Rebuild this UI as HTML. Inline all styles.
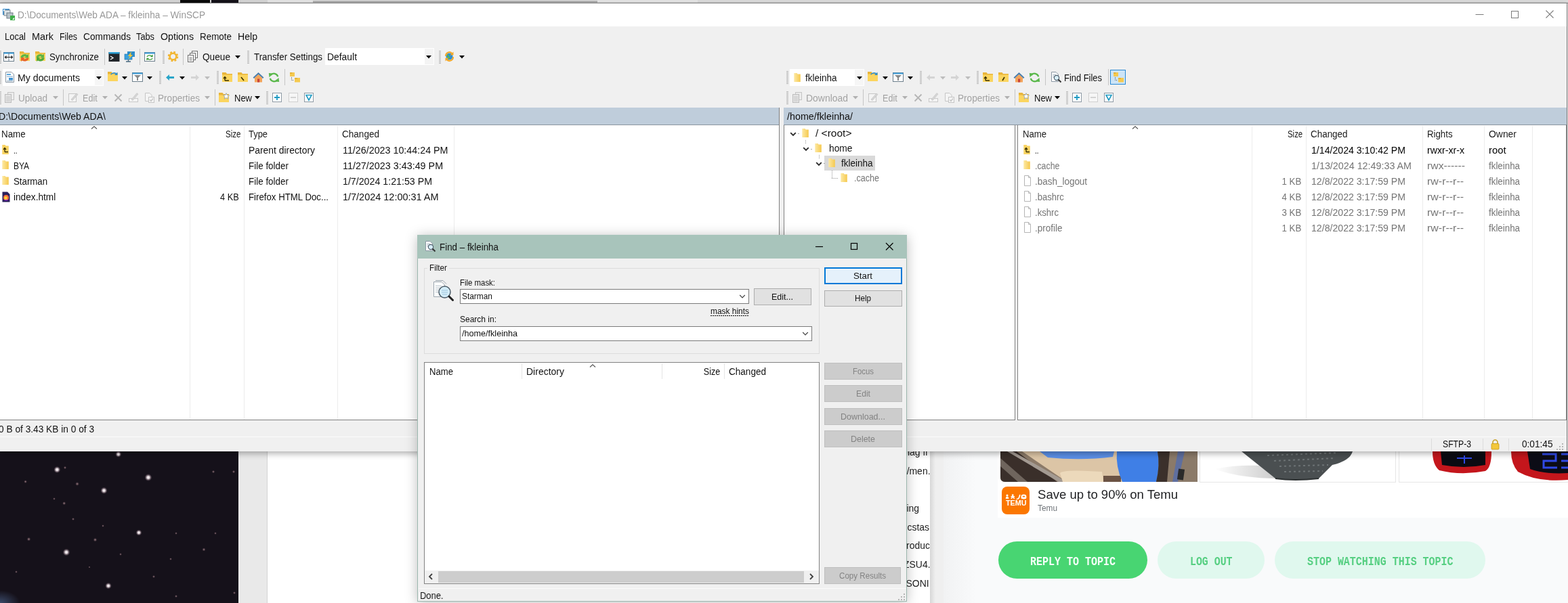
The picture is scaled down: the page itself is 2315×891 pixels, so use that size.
<!DOCTYPE html>
<html><head><meta charset="utf-8"><title>WinSCP</title>
<style>
html,body{margin:0;padding:0}
body{width:2315px;height:891px;position:relative;overflow:hidden;background:#fff;font-family:"Liberation Sans",sans-serif}
#root{position:absolute;left:0;top:0;width:2315px;height:891px;overflow:hidden;will-change:transform}
body div,body svg,body span.t{position:absolute;box-sizing:border-box}
span.t{white-space:nowrap;display:block}
</style></head><body><div id="root">
<div style="left:0px;top:0px;width:2315px;height:5px;background:#dcdcdc;"></div>
<div style="left:266px;top:0px;width:44px;height:4px;background:#0a0a0a;"></div>
<div style="left:312px;top:0px;width:40px;height:4px;background:#15121a;"></div>
<div style="left:395px;top:0px;width:635px;height:4px;background:#ececec;"></div>
<div style="left:1030px;top:0px;width:1285px;height:4px;background:#e2e2e2;"></div>
<div style="left:462px;top:1px;width:420px;height:3px;background:rgba(0,0,0,.22);"></div>
<div style="left:0px;top:4px;width:2315px;height:1px;background:#8a8a8a;"></div>
<div style="left:0px;top:667px;width:352px;height:224px;background:#15111a;"></div>
<div style="left:0px;top:872px;width:30px;height:19px;background:radial-gradient(ellipse at 0% 100%,rgba(90,120,170,.55),rgba(60,80,130,0) 70%);"></div>
<div style="left:352px;top:667px;width:43px;height:224px;background:#e9e9e9;"></div>
<div style="left:394px;top:667px;width:1px;height:224px;background:#d4d4d4;"></div>
<div style="left:395px;top:667px;width:978px;height:224px;background:#fff;"></div>
<div style="left:1373px;top:667px;width:20px;height:224px;background:#efefef;"></div>
<div style="left:1392px;top:667px;width:1px;height:224px;background:#dedede;"></div>
<div style="left:1393px;top:667px;width:47px;height:224px;background:linear-gradient(90deg,#f1f2f3,#f9fafb);"></div>
<div style="left:1440px;top:667px;width:875px;height:224px;background:#f9fafb;"></div>
<svg style="left:0px;top:667px" width="352" height="224" viewBox="0 0 352 224"><defs><radialGradient id="st"><stop offset="0" stop-color="#fff"/><stop offset=".35" stop-color="#f4e9ee" stop-opacity=".9"/><stop offset="1" stop-color="#8a6a7a" stop-opacity="0"/></radialGradient><radialGradient id="st2"><stop offset="0" stop-color="#c9a3a3" stop-opacity=".8"/><stop offset="1" stop-color="#7a5a6a" stop-opacity="0"/></radialGradient></defs><circle cx="174.8" cy="4.2" r="4.5" fill="url(#st)"/><circle cx="84.3" cy="27.0" r="5.1" fill="url(#st)"/><circle cx="218.9" cy="38.5" r="5.4" fill="url(#st)"/><circle cx="153.5" cy="57.8" r="5.1" fill="url(#st)"/><circle cx="114.0" cy="48.0" r="2.9" fill="url(#st2)"/><circle cx="205.0" cy="120.0" r="4.5" fill="url(#st)"/><circle cx="98.0" cy="149.0" r="5.4" fill="url(#st)"/><circle cx="160.0" cy="198.6" r="4.8" fill="url(#st)"/><circle cx="42.5" cy="129.7" r="2.9" fill="url(#st2)"/><circle cx="140.5" cy="130.6" r="2.9" fill="url(#st2)"/><circle cx="301.0" cy="145.0" r="2.6" fill="url(#st2)"/><circle cx="94.7" cy="76.7" r="2.6" fill="url(#st2)"/><circle cx="37.6" cy="44.7" r="2.4" fill="url(#st2)"/><circle cx="80.0" cy="70.0" r="1.9" fill="url(#st2)"/><circle cx="108.0" cy="100.0" r="2.1" fill="url(#st2)"/><circle cx="152.0" cy="110.0" r="1.9" fill="url(#st2)"/><circle cx="260.0" cy="121.0" r="1.9" fill="url(#st2)"/><circle cx="318.0" cy="121.0" r="1.9" fill="url(#st2)"/><circle cx="227.0" cy="185.0" r="2.1" fill="url(#st2)"/><circle cx="252.0" cy="159.0" r="1.9" fill="url(#st2)"/><circle cx="178.0" cy="152.0" r="1.9" fill="url(#st2)"/><circle cx="315.0" cy="30.0" r="2.2" fill="url(#st2)"/><circle cx="345.0" cy="30.0" r="2.2" fill="url(#st2)"/><circle cx="96.0" cy="24.0" r="2.2" fill="url(#st2)"/><circle cx="24.0" cy="178.0" r="1.9" fill="url(#st2)"/><circle cx="346.0" cy="209.0" r="2.1" fill="url(#st2)"/><circle cx="260.0" cy="214.0" r="2.1" fill="url(#st2)"/><circle cx="132.0" cy="171.0" r="1.6" fill="url(#st2)"/></svg>
<span class="t" style="top:685.30px;font:400 15px/21px 'Liberation Sans',sans-serif;color:#222;left:1335.98px;transform-origin:100% 0;transform:scaleX(0.9300);">/men.</span>
<span class="t" style="top:740.30px;font:400 15px/21px 'Liberation Sans',sans-serif;color:#222;left:1337.48px;transform-origin:100% 0;transform:scaleX(0.9300);">ing</span>
<span class="t" style="top:768.30px;font:400 15px/21px 'Liberation Sans',sans-serif;color:#222;left:1327.48px;transform-origin:100% 0;transform:scaleX(0.9300);">Ecstas</span>
<span class="t" style="top:823.30px;font:400 15px/21px 'Liberation Sans',sans-serif;color:#222;left:1330.99px;transform-origin:100% 0;transform:scaleX(0.9300);">ZSU4.</span>
<span class="t" style="top:851.30px;font:400 15px/21px 'Liberation Sans',sans-serif;color:#222;left:1334.83px;transform-origin:100% 0;transform:scaleX(0.9300);">SONI</span>
<span class="t" style="top:657.30px;font:400 15px/21px 'Liberation Sans',sans-serif;color:#222;left:1339.50px;transform-origin:0 0;transform:scaleX(0.9300);">lag fi</span>
<span class="t" style="top:795.30px;font:400 15px/21px 'Liberation Sans',sans-serif;color:#222;left:1338.00px;transform-origin:0 0;transform:scaleX(0.9300);">roduct</span>
<div style="left:1373px;top:667px;width:20px;height:224px;background:#efefef;"></div>
<div style="left:1373px;top:667px;width:8px;height:224px;background:linear-gradient(90deg,rgba(0,0,0,.10),rgba(0,0,0,0));"></div>
<div style="left:1473px;top:667px;width:842px;height:98px;background:#fff;"></div>
<svg style="left:1477px;top:667px" width="291" height="45" viewBox="0 0 291 45"><defs><clipPath id="adc"><path d="M0,0 H291 V45 H7 Q0,45 0,38 Z"/></clipPath></defs><g clip-path="url(#adc)"><rect width="291" height="45" fill="#8b7a69"/><path d="M0,0 H24 L84,45 H0 Z" fill="#3a2f2a"/><path d="M0,10 L40,45 H26 L0,22 Z" fill="#6f655d"/><path d="M10,0 L18,0 L98,45 L86,45 Z" fill="#a39a92"/><path d="M32,0 H180 V45 H98 Z" fill="#dcc5a6"/><path d="M58,0 H168 L166,8 Q120,14 70,9 Z" fill="#5b8fe6"/><path d="M88,32 Q92,26 150,30 L152,45 H92 Z" fill="#ecd9bb"/><path d="M152,36 H178 V45 H152 Z" fill="#6b5344"/><path d="M172,0 H232 Q236,20 230,45 H180 Q170,22 172,0 Z" fill="#3f7fe6"/><path d="M232,0 H250 L246,45 H230 Q236,20 232,0Z" fill="#3b302b"/><path d="M262,0 L272,0 L262,45 H254 Z" fill="#5f6f9f"/><rect x="262" y="26" width="9" height="16" fill="#2a2a2a" transform="rotate(8 266 34)"/></g></svg>
<div style="left:1771px;top:667px;width:290px;height:46px;background:#fff;border:1px solid #e6e6e6;border-top:0"></div>
<div style="left:2065px;top:667px;width:250px;height:46px;background:#fff;border:1px solid #e6e6e6;border-top:0;border-right:0"></div>
<svg style="left:1771px;top:667px" width="290" height="45" viewBox="0 0 290 45"><defs><linearGradient id="shd" x1="0" x2="1"><stop offset="0" stop-color="#fff"/><stop offset="1" stop-color="#c9c9c9"/></linearGradient></defs><path d="M22,26 Q60,18 110,22 L118,40 Q60,40 22,26 Z" fill="url(#shd)"/><path d="M62,0 H226 Q222,14 196,20 L176,40 Q140,44 112,40 Z" fill="#4a4f51"/><path d="M112,40 Q140,44 176,40" stroke="#2e3233" stroke-width="2" fill="none"/><path d="M100,6 L205,2 M110,14 L200,10 M118,22 L190,20 M125,30 L182,29" stroke="#6d7375" stroke-width="2" stroke-dasharray="3 4"/></svg>
<svg style="left:2065px;top:667px" width="250" height="45" viewBox="0 0 250 45"><path d="M50,0 H137 Q137,24 128,29 Q92,36 60,28 Q50,20 50,0 Z" fill="#c4161c"/><path d="M62,0 H128 V20 Q96,26 64,20 Z" fill="#0b0b12"/><path d="M86,10 H108 M97,6 V18" stroke="#2f49e6" stroke-width="2"/><path d="M166,0 H250 V42 Q205,46 176,30 Q166,18 166,0 Z" fill="#c4161c"/><path d="M190,0 H250 V32 Q215,34 194,26 Z" fill="#0c0c16"/><path d="M212,4 H232 V14 H214 V24 H234 M240,4 H250 M240,14 H250 M240,24 H250" stroke="#2f49e6" stroke-width="3" fill="none"/></svg>
<div style="left:1479px;top:719px;width:41px;height:41px;background:#fb7701;border-radius:8px"></div>
<span class="t" style="top:736.29px;font:700 11px/15px 'Liberation Sans',sans-serif;color:#fff;left:1484.50px;transform-origin:0 0;transform:scaleX(0.9851);">TEMU</span>
<svg style="left:1484px;top:730px" width="32" height="8" viewBox="0 0 32 8"><g fill="#fff"><path d="M0.8,7 Q0.5,4 3,3.800 Q5.5,4 5.200,7 Z"/><circle cx="3" cy="2" r="1.6"/><path d="M8.500,3 h5.500 v1.5 h-1.2 l1.5,2.500 h-1.8 l-1.200,-2 l-1.200,2 h-1.800 l1.500,-2.500 h-1.300 z"/><circle cx="11.2" cy="1.700" r="1.400"/><path d="M16.5,7 q3.500,0.300 4.500,-6.200 l1.600,0.300 q-1,7.600 -6.100,7.500 z"/><path d="M24.2,1.400 q3.300,-1.600 6.600,0 q1.300,2.800 0,5.600 q-3.300,0.800 -6.600,0 q-1.300,-2.800 0,-5.600 z M25.800,2.800 v1.600 h3.400 v-1.600 z"/></g></svg>
<span class="t" style="top:717.59px;font:400 18.5px/26px 'Liberation Sans',sans-serif;color:#202124;left:1532.00px;transform-origin:0 0;transform:scaleX(1.0030);">Save up to 90% on Temu</span>
<span class="t" style="top:741.67px;font:400 12.5px/18px 'Liberation Sans',sans-serif;color:#70757a;left:1532.00px;transform-origin:0 0;transform:scaleX(0.9487);">Temu</span>
<div style="left:1474px;top:800px;width:220px;height:55px;background:#48d572;border-radius:28px"></div>
<div style="left:1709px;top:800px;width:158px;height:55px;background:#e0f8ee;border-radius:28px"></div>
<div style="left:1882px;top:800px;width:311px;height:55px;background:#e0f8ee;border-radius:28px"></div>
<span class="t" style="top:817.84px;font:700 17.5px/24px 'Liberation Mono',monospace;color:#f4fff8;left:1521.00px;transform-origin:0 0;transform:scaleX(0.8570);">REPLY TO TOPIC</span>
<span class="t" style="top:817.84px;font:700 17.5px/24px 'Liberation Mono',monospace;color:#56cf82;left:1757.00px;transform-origin:0 0;transform:scaleX(0.8502);">LOG OUT</span>
<span class="t" style="top:817.84px;font:700 17.5px/24px 'Liberation Mono',monospace;color:#56cf82;left:1929.50px;transform-origin:0 0;transform:scaleX(0.8550);">STOP WATCHING THIS TOPIC</span>
<div style="left:0px;top:5px;width:2315px;height:662px;background:#f0f0f0;box-shadow:0 2px 9px 1px rgba(0,0,0,.33)"></div>
<div style="left:0px;top:5px;width:2315px;height:34px;background:#fff;"></div>
<div style="left:0px;top:39px;width:2315px;height:120px;background:#f0f0f0;"></div>
<div style="left:0px;top:159px;width:2315px;height:508px;background:#f0f0f0;"></div>
<svg style="left:3px;top:12px" width="19" height="18" viewBox="0 0 19 18"><rect x="1" y="1" width="10" height="9" fill="#3a8fd0"/><rect x="3" y="3" width="9" height="8" fill="#dfe6ea" stroke="#7a8790" stroke-width="1"/><rect x="7" y="7" width="9" height="8" fill="#b9c3c9" stroke="#6f7c85" stroke-width="1"/><rect x="12" y="11" width="7" height="7" fill="#3fae49"/><path d="M2,2 l3,0 l-3,3z" fill="#fff"/><path d="M18,17 l-3,0 l3,-3z" fill="#fff"/></svg>
<span class="t" style="top:12.15px;font:400 14px/20px 'Liberation Sans',sans-serif;color:#999;left:26.00px;transform-origin:0 0;transform:scaleX(0.9735);">D:\Documents\Web ADA – fkleinha – WinSCP</span>
<svg style="left:2178px;top:15px" width="13" height="13" viewBox="0 0 13 13"><path d="M0.5,6.5 H12.5" stroke="#7a7a7a" stroke-width="1"/></svg>
<svg style="left:2230px;top:15px" width="13" height="13" viewBox="0 0 13 13"><rect x="1.5" y="1.5" width="10" height="10" fill="none" stroke="#7a7a7a" stroke-width="1"/></svg>
<svg style="left:2281px;top:14px" width="14" height="14" viewBox="0 0 14 14"><path d="M1.5,1.5 L12.5,12.5 M12.5,1.5 L1.5,12.5" stroke="#7a7a7a" stroke-width="1.1"/></svg>
<span class="t" style="top:44.15px;font:400 14px/20px 'Liberation Sans',sans-serif;color:#111;left:7.00px;transform-origin:0 0;transform:scaleX(0.9262);">Local</span>
<span class="t" style="top:44.15px;font:400 14px/20px 'Liberation Sans',sans-serif;color:#111;left:47.00px;transform-origin:0 0;transform:scaleX(1.0286);">Mark</span>
<span class="t" style="top:44.15px;font:400 14px/20px 'Liberation Sans',sans-serif;color:#111;left:88.00px;transform-origin:0 0;transform:scaleX(0.8796);">Files</span>
<span class="t" style="top:44.15px;font:400 14px/20px 'Liberation Sans',sans-serif;color:#111;left:123.00px;transform-origin:0 0;transform:scaleX(0.9779);">Commands</span>
<span class="t" style="top:44.15px;font:400 14px/20px 'Liberation Sans',sans-serif;color:#111;left:201.00px;transform-origin:0 0;transform:scaleX(0.9130);">Tabs</span>
<span class="t" style="top:44.15px;font:400 14px/20px 'Liberation Sans',sans-serif;color:#111;left:237.00px;transform-origin:0 0;transform:scaleX(1.0156);">Options</span>
<span class="t" style="top:44.15px;font:400 14px/20px 'Liberation Sans',sans-serif;color:#111;left:295.00px;transform-origin:0 0;transform:scaleX(0.9588);">Remote</span>
<span class="t" style="top:44.15px;font:400 14px/20px 'Liberation Sans',sans-serif;color:#111;left:351.00px;transform-origin:0 0;transform:scaleX(1.0072);">Help</span>
<svg style="left:-1px;top:75px" width="3" height="20" viewBox="0 0 3 20"><rect x="0" y="0" width="3" height="1" fill="#b4b4b4"/><rect x="0" y="2" width="3" height="1" fill="#b4b4b4"/><rect x="0" y="4" width="3" height="1" fill="#b4b4b4"/><rect x="0" y="6" width="3" height="1" fill="#b4b4b4"/><rect x="0" y="8" width="3" height="1" fill="#b4b4b4"/><rect x="0" y="10" width="3" height="1" fill="#b4b4b4"/><rect x="0" y="12" width="3" height="1" fill="#b4b4b4"/><rect x="0" y="14" width="3" height="1" fill="#b4b4b4"/><rect x="0" y="16" width="3" height="1" fill="#b4b4b4"/><rect x="0" y="18" width="3" height="1" fill="#b4b4b4"/></svg>
<svg style="left:5px;top:76px" width="17" height="17" viewBox="0 0 17 17"><rect x="0.5" y="1.5" width="15" height="13" fill="#fff" stroke="#6d7f8c"/><rect x="0.5" y="1.5" width="15" height="2" fill="#3a9bd8"/><path d="M8,2 V14" stroke="#6d7f8c"/><path d="M2.5,8.5 H13.5 M4.5,6.5 L2.5,8.5 L4.5,10.5 M11.5,6.5 L13.5,8.5 L11.5,10.5" stroke="#222" fill="none" stroke-width="1.2"/></svg>
<svg style="left:28px;top:75px" width="17" height="16" viewBox="0 0 17 16"><path d="M1,1 H6.5 L8,3 H16 V15 H1 Z" fill="#e9b53a"/><path d="M1,4.5 H16 V15 H1 Z" fill="#fbd55f"/><g transform="translate(0,1)"><path d="M2.5,9 A6,5 0 0 1 12.3,5.300 L14,3.600 V9.500 H8.200 L10.2,7.500 A3,2.300 0 0 0 5.800,9 Z" fill="#5fb446"/><path d="M14.5,9.500 A6,5 0 0 1 4.700,13.200 L3,14.900 V9 H8.800 L6.800,11 A3,2.300 0 0 0 11.2,9.500 Z" fill="#e8632a"/></g></svg>
<svg style="left:51px;top:75px" width="17" height="16" viewBox="0 0 17 16"><path d="M1,1 H6.5 L8,3 H16 V15 H1 Z" fill="#e9b53a"/><path d="M1,4.5 H16 V15 H1 Z" fill="#fbd55f"/><g transform="translate(0,1)"><path d="M2.5,9 A6,5 0 0 1 12.3,5.300 L14,3.600 V9.500 H8.200 L10.2,7.500 A3,2.300 0 0 0 5.800,9 Z" fill="#5fb446"/><path d="M14.5,9.500 A6,5 0 0 1 4.700,13.200 L3,14.900 V9 H8.800 L6.800,11 A3,2.300 0 0 0 11.2,9.500 Z" fill="#4ea83a"/></g></svg>
<span class="t" style="top:74.15px;font:400 14px/20px 'Liberation Sans',sans-serif;color:#111;left:73.00px;transform-origin:0 0;transform:scaleX(0.9475);">Synchronize</span>
<div style="left:154px;top:72px;width:1px;height:24px;background:#c5c5c5;"></div>
<svg style="left:160px;top:76px" width="17" height="17" viewBox="0 0 17 17"><rect x="0.5" y="1" width="16" height="14" fill="#22262b"/><rect x="0.5" y="1" width="16" height="2.5" fill="#2a9fd6"/><path d="M3,7 L7,9.5 L3,12" stroke="#fff" fill="none" stroke-width="1.3"/></svg>
<svg style="left:183px;top:75px" width="17" height="17" viewBox="0 0 17 17"><rect x="5" y="1" width="11" height="8" fill="#2f8ecb"/><rect x="1" y="5" width="11" height="8" fill="#3aa0dd" stroke="#1d6fa5" stroke-width=".6"/><path d="M6.5,13 V15.5 M3,16 H10" stroke="#4a6a80" stroke-width="1.4"/><path d="M11,1 L6,8 H9 L6,13 L13,6 H10 Z" fill="#f7c531"/></svg>
<div style="left:206px;top:72px;width:1px;height:24px;background:#c5c5c5;"></div>
<svg style="left:213px;top:76px" width="17" height="17" viewBox="0 0 17 17"><rect x="0.5" y="1.5" width="15" height="13" fill="#fff" stroke="#6d7f8c"/><rect x="0.5" y="1.5" width="15" height="2" fill="#3a9bd8"/><path d="M4,8 a4,3 0 0 1 7,-1 M12,5 v2.5 h-2.5 M12,10 a4,3 0 0 1 -7,1 M4,13 v-2.5 h2.5" stroke="#3f9b3a" fill="none" stroke-width="1.3"/></svg>
<svg style="left:240px;top:75px" width="3" height="20" viewBox="0 0 3 20"><rect x="0" y="0" width="3" height="1" fill="#b4b4b4"/><rect x="0" y="2" width="3" height="1" fill="#b4b4b4"/><rect x="0" y="4" width="3" height="1" fill="#b4b4b4"/><rect x="0" y="6" width="3" height="1" fill="#b4b4b4"/><rect x="0" y="8" width="3" height="1" fill="#b4b4b4"/><rect x="0" y="10" width="3" height="1" fill="#b4b4b4"/><rect x="0" y="12" width="3" height="1" fill="#b4b4b4"/><rect x="0" y="14" width="3" height="1" fill="#b4b4b4"/><rect x="0" y="16" width="3" height="1" fill="#b4b4b4"/><rect x="0" y="18" width="3" height="1" fill="#b4b4b4"/></svg>
<svg style="left:247px;top:75px" width="17" height="17" viewBox="0 0 17 17"><circle cx="8.5" cy="8.5" r="6.2" fill="none" stroke="#f2b632" stroke-width="3.2" stroke-dasharray="2.6 2.27"/><circle cx="8.5" cy="8.5" r="4.8" fill="none" stroke="#f2b632" stroke-width="2.6"/></svg>
<div style="left:270px;top:72px;width:1px;height:24px;background:#c5c5c5;"></div>
<svg style="left:277px;top:75px" width="17" height="17" viewBox="0 0 17 17"><rect x="6.5" y="0.5" width="8" height="10" fill="#f4f4f4" stroke="#707070"/><rect x="3.5" y="3.5" width="8" height="10" fill="#f4f4f4" stroke="#707070"/><rect x="0.5" y="6.5" width="8" height="10" fill="#f4f4f4" stroke="#707070"/><path d="M2.5,10 H6.5 M2.5,12 H6.5 M2.5,14 H6.5" stroke="#707070" stroke-width=".8"/></svg>
<span class="t" style="top:74.15px;font:400 14px/20px 'Liberation Sans',sans-serif;color:#111;left:299.00px;transform-origin:0 0;transform:scaleX(0.9754);">Queue</span>
<svg style="left:347px;top:82px" width="8" height="5" viewBox="0 0 8 5"><path d="M0,0 H8 L4,4.5 Z" fill="#000"/></svg>
<svg style="left:365px;top:75px" width="3" height="20" viewBox="0 0 3 20"><rect x="0" y="0" width="3" height="1" fill="#b4b4b4"/><rect x="0" y="2" width="3" height="1" fill="#b4b4b4"/><rect x="0" y="4" width="3" height="1" fill="#b4b4b4"/><rect x="0" y="6" width="3" height="1" fill="#b4b4b4"/><rect x="0" y="8" width="3" height="1" fill="#b4b4b4"/><rect x="0" y="10" width="3" height="1" fill="#b4b4b4"/><rect x="0" y="12" width="3" height="1" fill="#b4b4b4"/><rect x="0" y="14" width="3" height="1" fill="#b4b4b4"/><rect x="0" y="16" width="3" height="1" fill="#b4b4b4"/><rect x="0" y="18" width="3" height="1" fill="#b4b4b4"/></svg>
<span class="t" style="top:74.15px;font:400 14px/20px 'Liberation Sans',sans-serif;color:#111;left:375.00px;transform-origin:0 0;transform:scaleX(0.9521);">Transfer Settings</span>
<div style="left:480px;top:71px;width:161px;height:25px;background:#fff;"></div>
<div style="left:627px;top:72px;width:13px;height:23px;background:#f4f4f4;"></div>
<span class="t" style="top:74.15px;font:400 14px/20px 'Liberation Sans',sans-serif;color:#111;left:483.00px;transform-origin:0 0;transform:scaleX(0.9919);">Default</span>
<svg style="left:629px;top:82px" width="8" height="5" viewBox="0 0 8 5"><path d="M0,0 H8 L4,4.5 Z" fill="#000"/></svg>
<svg style="left:648px;top:75px" width="3" height="20" viewBox="0 0 3 20"><rect x="0" y="0" width="3" height="1" fill="#b4b4b4"/><rect x="0" y="2" width="3" height="1" fill="#b4b4b4"/><rect x="0" y="4" width="3" height="1" fill="#b4b4b4"/><rect x="0" y="6" width="3" height="1" fill="#b4b4b4"/><rect x="0" y="8" width="3" height="1" fill="#b4b4b4"/><rect x="0" y="10" width="3" height="1" fill="#b4b4b4"/><rect x="0" y="12" width="3" height="1" fill="#b4b4b4"/><rect x="0" y="14" width="3" height="1" fill="#b4b4b4"/><rect x="0" y="16" width="3" height="1" fill="#b4b4b4"/><rect x="0" y="18" width="3" height="1" fill="#b4b4b4"/></svg>
<svg style="left:655px;top:75px" width="17" height="17" viewBox="0 0 17 17"><circle cx="8.5" cy="8.5" r="5" fill="#2f8fd1"/><path d="M6,5 q2,1 1,3 q3,1 2,4 q-3,0 -3,-3 q-2,-1 0,-4" fill="#56b947"/><path d="M2,8 a6.5,6.5 0 0 1 11,-5 l1.5,-1.5 v5 h-5 l1.7,-1.7 a4,4 0 0 0 -7,3z" fill="#f3a82a"/><path d="M15,9 a6.5,6.5 0 0 1 -11,5 l-1.5,1.5 v-5 h5 l-1.7,1.7 a4,4 0 0 0 7,-3z" fill="#f3a82a"/></svg>
<svg style="left:678px;top:82px" width="8" height="5" viewBox="0 0 8 5"><path d="M0,0 H8 L4,4.5 Z" fill="#000"/></svg>
<div style="left:4px;top:102px;width:149px;height:25px;background:#fff;"></div>
<div style="left:140px;top:103px;width:12px;height:23px;background:#f6f6f6;"></div>
<svg style="left:-1px;top:105px" width="3" height="20" viewBox="0 0 3 20"><rect x="0" y="0" width="3" height="1" fill="#b4b4b4"/><rect x="0" y="2" width="3" height="1" fill="#b4b4b4"/><rect x="0" y="4" width="3" height="1" fill="#b4b4b4"/><rect x="0" y="6" width="3" height="1" fill="#b4b4b4"/><rect x="0" y="8" width="3" height="1" fill="#b4b4b4"/><rect x="0" y="10" width="3" height="1" fill="#b4b4b4"/><rect x="0" y="12" width="3" height="1" fill="#b4b4b4"/><rect x="0" y="14" width="3" height="1" fill="#b4b4b4"/><rect x="0" y="16" width="3" height="1" fill="#b4b4b4"/><rect x="0" y="18" width="3" height="1" fill="#b4b4b4"/></svg>
<svg style="left:7px;top:106px" width="17" height="17" viewBox="0 0 17 17"><path d="M1.5,0.5 H10 L13.5,4 V15.5 H1.5 Z" fill="#fff" stroke="#8a97a3"/><rect x="3" y="3" width="6" height="2" fill="#5aa7dd"/><rect x="3" y="6.5" width="9" height="1.3" fill="#8fb7d6"/><rect x="6" y="9" width="6" height="3.5" fill="#3a8fd0"/><rect x="3" y="13" width="9" height="1.2" fill="#9fb6c8"/></svg>
<span class="t" style="top:105.15px;font:400 14px/20px 'Liberation Sans',sans-serif;color:#111;left:26.00px;transform-origin:0 0;transform:scaleX(1.0106);">My documents</span>
<svg style="left:142px;top:113px" width="8" height="5" viewBox="0 0 8 5"><path d="M0,0 H8 L4,4.5 Z" fill="#000"/></svg>
<svg style="left:158px;top:105px" width="17" height="16" viewBox="0 0 17 16"><path d="M1,1 H6.5 L8,3 H16 V15 H1 Z" fill="#e9b53a"/><path d="M1,4.5 H16 V15 H1 Z" fill="#fbd55f"/><g transform="translate(0,1)"><path d="M5,4 a6,5 0 0 1 9,-2 l1.5,-1.5 v4.5 h-4.5 l1.6,-1.6 a4,3.5 0 0 0 -6,1z" fill="#2f8fd1"/></g></svg>
<svg style="left:180px;top:113px" width="8" height="5" viewBox="0 0 8 5"><path d="M0,0 H8 L4,4.5 Z" fill="#000"/></svg>
<svg style="left:195px;top:106px" width="17" height="17" viewBox="0 0 17 17"><rect x="0.5" y="1.5" width="15" height="13" fill="#fff" stroke="#6d7f8c"/><rect x="0.5" y="1.5" width="15" height="2" fill="#3a9bd8"/><path d="M3,5 H13 L9,9 V13 H7 V9 Z" fill="#8a8a8a"/></svg>
<svg style="left:217px;top:113px" width="8" height="5" viewBox="0 0 8 5"><path d="M0,0 H8 L4,4.5 Z" fill="#000"/></svg>
<svg style="left:235px;top:105px" width="3" height="20" viewBox="0 0 3 20"><rect x="0" y="0" width="3" height="1" fill="#b4b4b4"/><rect x="0" y="2" width="3" height="1" fill="#b4b4b4"/><rect x="0" y="4" width="3" height="1" fill="#b4b4b4"/><rect x="0" y="6" width="3" height="1" fill="#b4b4b4"/><rect x="0" y="8" width="3" height="1" fill="#b4b4b4"/><rect x="0" y="10" width="3" height="1" fill="#b4b4b4"/><rect x="0" y="12" width="3" height="1" fill="#b4b4b4"/><rect x="0" y="14" width="3" height="1" fill="#b4b4b4"/><rect x="0" y="16" width="3" height="1" fill="#b4b4b4"/><rect x="0" y="18" width="3" height="1" fill="#b4b4b4"/></svg>
<svg style="left:244px;top:109px" width="14" height="11" viewBox="0 0 14 11"><path d="M1,5.5 L6,1 V4 H13 V7 H6 V10 Z" fill="#2aa5c9"/></svg>
<svg style="left:265px;top:113px" width="8" height="5" viewBox="0 0 8 5"><path d="M0,0 H8 L4,4.5 Z" fill="#000"/></svg>
<svg style="left:281px;top:109px" width="14" height="11" viewBox="0 0 14 11"><path d="M13,5.5 L8,1 V4 H1 V7 H8 V10 Z" fill="#d4d4d4"/></svg>
<svg style="left:302px;top:113px" width="8" height="5" viewBox="0 0 8 5"><path d="M0,0 H8 L4,4.5 Z" fill="#bdbdbd"/></svg>
<svg style="left:320px;top:105px" width="3" height="20" viewBox="0 0 3 20"><rect x="0" y="0" width="3" height="1" fill="#b4b4b4"/><rect x="0" y="2" width="3" height="1" fill="#b4b4b4"/><rect x="0" y="4" width="3" height="1" fill="#b4b4b4"/><rect x="0" y="6" width="3" height="1" fill="#b4b4b4"/><rect x="0" y="8" width="3" height="1" fill="#b4b4b4"/><rect x="0" y="10" width="3" height="1" fill="#b4b4b4"/><rect x="0" y="12" width="3" height="1" fill="#b4b4b4"/><rect x="0" y="14" width="3" height="1" fill="#b4b4b4"/><rect x="0" y="16" width="3" height="1" fill="#b4b4b4"/><rect x="0" y="18" width="3" height="1" fill="#b4b4b4"/></svg>
<svg style="left:327px;top:106px" width="17" height="16" viewBox="0 0 17 16"><path d="M1,1 H6.5 L8,3 H16 V15 H1 Z" fill="#e9b53a"/><path d="M1,4.5 H16 V15 H1 Z" fill="#fbd55f"/><g transform="translate(0,1)"><path d="M5,12 V7 M3,9 L5,6.5 L7,9 M5,12 H11" stroke="#3a3000" stroke-width="1.4" fill="none"/></g></svg>
<svg style="left:350px;top:106px" width="17" height="16" viewBox="0 0 17 16"><path d="M1,1 H6.5 L8,3 H16 V15 H1 Z" fill="#e9b53a"/><path d="M1,4.5 H16 V15 H1 Z" fill="#fbd55f"/><g transform="translate(0,1)"><path d="M6,7 L10,12" stroke="#3a3000" stroke-width="1.6" fill="none"/></g></svg>
<svg style="left:373px;top:106px" width="17" height="17" viewBox="0 0 17 17"><path d="M0.5,8.5 L8.5,1 L16.5,8.5 L15,10 L8.5,4 L2,10 Z" fill="#4a7fae"/><path d="M3,9 L8.5,4 L14,9 V15.5 H3 Z" fill="#f3a45a"/><rect x="7" y="10.5" width="3.2" height="5" fill="#c9443a"/></svg>
<svg style="left:396px;top:106px" width="17" height="17" viewBox="0 0 17 17"><path d="M14.2,7.2 A6,6 0 0 0 3.6,5" fill="none" stroke="#5ab84b" stroke-width="2.3"/><path d="M0.8,2 L7,2.6 L1.6,8.2 Z" fill="#5ab84b"/><path d="M2.8,9.8 A6,6 0 0 0 13.4,12" fill="none" stroke="#5ab84b" stroke-width="2.3"/><path d="M16.2,15 L10,14.4 L15.4,8.800 Z" fill="#5ab84b"/></svg>
<div style="left:420px;top:102px;width:1px;height:24px;background:#c5c5c5;"></div>
<svg style="left:427px;top:106px" width="17" height="17" viewBox="0 0 17 17"><rect x="1" y="1" width="7" height="6" fill="#f5c94f"/><rect x="1" y="1" width="3.5" height="1.6" fill="#e2ad2f"/><rect x="8" y="9" width="8" height="6.5" fill="#f5c94f"/><rect x="8" y="9" width="4" height="1.6" fill="#e2ad2f"/><path d="M3.5,8 V12.5 H7" stroke="#555" stroke-dasharray="1 1" fill="none"/></svg>
<div style="left:1166px;top:102px;width:110px;height:25px;background:#fff;"></div>
<div style="left:1262px;top:103px;width:13px;height:23px;background:#f6f6f6;"></div>
<svg style="left:1161px;top:105px" width="3" height="20" viewBox="0 0 3 20"><rect x="0" y="0" width="3" height="1" fill="#b4b4b4"/><rect x="0" y="2" width="3" height="1" fill="#b4b4b4"/><rect x="0" y="4" width="3" height="1" fill="#b4b4b4"/><rect x="0" y="6" width="3" height="1" fill="#b4b4b4"/><rect x="0" y="8" width="3" height="1" fill="#b4b4b4"/><rect x="0" y="10" width="3" height="1" fill="#b4b4b4"/><rect x="0" y="12" width="3" height="1" fill="#b4b4b4"/><rect x="0" y="14" width="3" height="1" fill="#b4b4b4"/><rect x="0" y="16" width="3" height="1" fill="#b4b4b4"/><rect x="0" y="18" width="3" height="1" fill="#b4b4b4"/></svg>
<svg style="left:1172px;top:107px" width="11" height="15" viewBox="0 0 11 15"><defs><linearGradient id="sf" x1="0" x2="1"><stop offset="0" stop-color="#fde9a4"/><stop offset="1" stop-color="#f5c94f"/></linearGradient></defs><path d="M0.3,1 H4.6 L5.6,2.4 H9.800 V14 H0.3 Z" fill="url(#sf)"/></svg>
<span class="t" style="top:105.15px;font:400 14px/20px 'Liberation Sans',sans-serif;color:#111;left:1189.00px;transform-origin:0 0;transform:scaleX(0.9636);">fkleinha</span>
<svg style="left:1265px;top:113px" width="8" height="5" viewBox="0 0 8 5"><path d="M0,0 H8 L4,4.5 Z" fill="#000"/></svg>
<svg style="left:1280px;top:105px" width="17" height="16" viewBox="0 0 17 16"><path d="M1,1 H6.5 L8,3 H16 V15 H1 Z" fill="#e9b53a"/><path d="M1,4.5 H16 V15 H1 Z" fill="#fbd55f"/><g transform="translate(0,1)"><path d="M5,4 a6,5 0 0 1 9,-2 l1.5,-1.5 v4.5 h-4.5 l1.6,-1.6 a4,3.5 0 0 0 -6,1z" fill="#2f8fd1"/></g></svg>
<svg style="left:1303px;top:113px" width="8" height="5" viewBox="0 0 8 5"><path d="M0,0 H8 L4,4.5 Z" fill="#000"/></svg>
<svg style="left:1318px;top:106px" width="17" height="17" viewBox="0 0 17 17"><rect x="0.5" y="1.5" width="15" height="13" fill="#fff" stroke="#6d7f8c"/><rect x="0.5" y="1.5" width="15" height="2" fill="#3a9bd8"/><path d="M3,5 H13 L9,9 V13 H7 V9 Z" fill="#8a8a8a"/></svg>
<svg style="left:1340px;top:113px" width="8" height="5" viewBox="0 0 8 5"><path d="M0,0 H8 L4,4.5 Z" fill="#000"/></svg>
<svg style="left:1358px;top:105px" width="3" height="20" viewBox="0 0 3 20"><rect x="0" y="0" width="3" height="1" fill="#b4b4b4"/><rect x="0" y="2" width="3" height="1" fill="#b4b4b4"/><rect x="0" y="4" width="3" height="1" fill="#b4b4b4"/><rect x="0" y="6" width="3" height="1" fill="#b4b4b4"/><rect x="0" y="8" width="3" height="1" fill="#b4b4b4"/><rect x="0" y="10" width="3" height="1" fill="#b4b4b4"/><rect x="0" y="12" width="3" height="1" fill="#b4b4b4"/><rect x="0" y="14" width="3" height="1" fill="#b4b4b4"/><rect x="0" y="16" width="3" height="1" fill="#b4b4b4"/><rect x="0" y="18" width="3" height="1" fill="#b4b4b4"/></svg>
<svg style="left:1367px;top:109px" width="14" height="11" viewBox="0 0 14 11"><path d="M1,5.5 L6,1 V4 H13 V7 H6 V10 Z" fill="#d4d4d4"/></svg>
<svg style="left:1388px;top:113px" width="8" height="5" viewBox="0 0 8 5"><path d="M0,0 H8 L4,4.5 Z" fill="#bdbdbd"/></svg>
<svg style="left:1403px;top:109px" width="14" height="11" viewBox="0 0 14 11"><path d="M13,5.5 L8,1 V4 H1 V7 H8 V10 Z" fill="#d4d4d4"/></svg>
<svg style="left:1425px;top:113px" width="8" height="5" viewBox="0 0 8 5"><path d="M0,0 H8 L4,4.5 Z" fill="#bdbdbd"/></svg>
<svg style="left:1442px;top:105px" width="3" height="20" viewBox="0 0 3 20"><rect x="0" y="0" width="3" height="1" fill="#b4b4b4"/><rect x="0" y="2" width="3" height="1" fill="#b4b4b4"/><rect x="0" y="4" width="3" height="1" fill="#b4b4b4"/><rect x="0" y="6" width="3" height="1" fill="#b4b4b4"/><rect x="0" y="8" width="3" height="1" fill="#b4b4b4"/><rect x="0" y="10" width="3" height="1" fill="#b4b4b4"/><rect x="0" y="12" width="3" height="1" fill="#b4b4b4"/><rect x="0" y="14" width="3" height="1" fill="#b4b4b4"/><rect x="0" y="16" width="3" height="1" fill="#b4b4b4"/><rect x="0" y="18" width="3" height="1" fill="#b4b4b4"/></svg>
<svg style="left:1450px;top:106px" width="17" height="16" viewBox="0 0 17 16"><path d="M1,1 H6.5 L8,3 H16 V15 H1 Z" fill="#e9b53a"/><path d="M1,4.5 H16 V15 H1 Z" fill="#fbd55f"/><g transform="translate(0,1)"><path d="M5,12 V7 M3,9 L5,6.5 L7,9 M5,12 H11" stroke="#3a3000" stroke-width="1.4" fill="none"/></g></svg>
<svg style="left:1473px;top:106px" width="17" height="16" viewBox="0 0 17 16"><path d="M1,1 H6.5 L8,3 H16 V15 H1 Z" fill="#e9b53a"/><path d="M1,4.5 H16 V15 H1 Z" fill="#fbd55f"/><g transform="translate(0,1)"><path d="M10,7 L7,12" stroke="#3a3000" stroke-width="1.6" fill="none"/></g></svg>
<svg style="left:1496px;top:106px" width="17" height="17" viewBox="0 0 17 17"><path d="M0.5,8.5 L8.5,1 L16.5,8.5 L15,10 L8.5,4 L2,10 Z" fill="#4a7fae"/><path d="M3,9 L8.5,4 L14,9 V15.5 H3 Z" fill="#f3a45a"/><rect x="7" y="10.5" width="3.2" height="5" fill="#c9443a"/></svg>
<svg style="left:1519px;top:106px" width="17" height="17" viewBox="0 0 17 17"><path d="M14.2,7.2 A6,6 0 0 0 3.6,5" fill="none" stroke="#5ab84b" stroke-width="2.3"/><path d="M0.8,2 L7,2.6 L1.6,8.2 Z" fill="#5ab84b"/><path d="M2.8,9.8 A6,6 0 0 0 13.4,12" fill="none" stroke="#5ab84b" stroke-width="2.3"/><path d="M16.2,15 L10,14.4 L15.4,8.800 Z" fill="#5ab84b"/></svg>
<div style="left:1543px;top:102px;width:1px;height:24px;background:#c5c5c5;"></div>
<svg style="left:1551px;top:106px" width="17" height="17" viewBox="0 0 17 17"><path d="M1.5,0.5 H8 L11.5,4 V14.5 H1.5 Z" fill="#fff" stroke="#8a97a3"/><path d="M3.5,4.5 H8 M3.5,6.5 H9 M3.5,8.5 H7" stroke="#9fb0bd"/><circle cx="9" cy="9" r="3.6" fill="#d7eefa" stroke="#4a5a66" stroke-width="1.1"/><path d="M11.5,11.5 L15.5,15.5" stroke="#333" stroke-width="2"/></svg>
<span class="t" style="top:105.15px;font:400 14px/20px 'Liberation Sans',sans-serif;color:#111;left:1571.00px;transform-origin:0 0;transform:scaleX(0.9228);">Find Files</span>
<div style="left:1636px;top:102px;width:1px;height:24px;background:#c5c5c5;"></div>
<div style="left:1639px;top:103px;width:23px;height:22px;background:#cce4f7;border:1px solid #2a8ad4"></div>
<svg style="left:1642.5px;top:106px" width="17" height="17" viewBox="0 0 17 17"><rect x="1" y="1" width="7" height="6" fill="#f5c94f"/><rect x="1" y="1" width="3.5" height="1.6" fill="#e2ad2f"/><rect x="8" y="9" width="8" height="6.5" fill="#f5c94f"/><rect x="8" y="9" width="4" height="1.6" fill="#e2ad2f"/><path d="M3.5,8 V12.5 H7" stroke="#555" stroke-dasharray="1 1" fill="none"/></svg>
<svg style="left:-1px;top:135px" width="3" height="20" viewBox="0 0 3 20"><rect x="0" y="0" width="3" height="1" fill="#b4b4b4"/><rect x="0" y="2" width="3" height="1" fill="#b4b4b4"/><rect x="0" y="4" width="3" height="1" fill="#b4b4b4"/><rect x="0" y="6" width="3" height="1" fill="#b4b4b4"/><rect x="0" y="8" width="3" height="1" fill="#b4b4b4"/><rect x="0" y="10" width="3" height="1" fill="#b4b4b4"/><rect x="0" y="12" width="3" height="1" fill="#b4b4b4"/><rect x="0" y="14" width="3" height="1" fill="#b4b4b4"/><rect x="0" y="16" width="3" height="1" fill="#b4b4b4"/><rect x="0" y="18" width="3" height="1" fill="#b4b4b4"/></svg>
<svg style="left:6px;top:136px" width="17" height="17" viewBox="0 0 17 17"><rect x="5.5" y="0.5" width="9" height="11" fill="#ececec" stroke="#c4c4c4"/><rect x="1.5" y="3.5" width="9" height="12" fill="#e4e4e4" stroke="#bdbdbd"/><path d="M3,7 H9 M3,9 H9 M3,11 H9 M3,13 H9" stroke="#c9c9c9"/></svg>
<span class="t" style="top:134.75px;font:400 14px/20px 'Liberation Sans',sans-serif;color:#a3a3a3;left:27.00px;transform-origin:0 0;transform:scaleX(0.9692);">Upload</span>
<svg style="left:78px;top:142px" width="8" height="5" viewBox="0 0 8 5"><path d="M0,0 H8 L4,4.5 Z" fill="#b0b0b0"/></svg>
<div style="left:93px;top:132px;width:1px;height:24px;background:#c5c5c5;"></div>
<svg style="left:100px;top:136px" width="17" height="17" viewBox="0 0 17 17"><rect x="1.5" y="2.5" width="11" height="12" fill="#f4f4f4" stroke="#c6c6c6"/><path d="M5,11 L13,2 L15,3.5 L7,12.5 Z" fill="#d5d5d5" stroke="#bdbdbd" stroke-width=".6"/></svg>
<span class="t" style="top:134.75px;font:400 14px/20px 'Liberation Sans',sans-serif;color:#a3a3a3;left:121.80px;transform-origin:0 0;transform:scaleX(0.8995);">Edit</span>
<svg style="left:151px;top:142px" width="8" height="5" viewBox="0 0 8 5"><path d="M0,0 H8 L4,4.5 Z" fill="#b0b0b0"/></svg>
<svg style="left:168px;top:138px" width="13" height="13" viewBox="0 0 13 13"><path d="M1.5,1.5 L11.5,11.5 M11.5,1.5 L1.5,11.5" stroke="#b5b5b5" stroke-width="1.8"/></svg>
<svg style="left:189px;top:136px" width="17" height="17" viewBox="0 0 17 17"><rect x="1.5" y="9.5" width="13" height="5" fill="#f4f4f4" stroke="#c9c9c9"/><path d="M5,11 L13,1.5 L15,3 L7,12.5 Z" fill="#d5d5d5" stroke="#c2c2c2" stroke-width=".6"/></svg>
<svg style="left:213px;top:136px" width="17" height="17" viewBox="0 0 17 17"><path d="M1.5,1.5 H8 L11,4.5 V13.5 H1.5 Z" fill="#f4f4f4" stroke="#c6c6c6"/><rect x="6.5" y="7.5" width="8" height="8" fill="#f4f4f4" stroke="#c6c6c6"/><path d="M8.5,11.5 L10,13.5 L13,9.5" fill="none" stroke="#c2c2c2" stroke-width="1.3"/></svg>
<span class="t" style="top:134.75px;font:400 14px/20px 'Liberation Sans',sans-serif;color:#a3a3a3;left:233.00px;transform-origin:0 0;transform:scaleX(0.9716);">Properties</span>
<svg style="left:302px;top:142px" width="8" height="5" viewBox="0 0 8 5"><path d="M0,0 H8 L4,4.5 Z" fill="#b0b0b0"/></svg>
<div style="left:317px;top:132px;width:1px;height:24px;background:#c5c5c5;"></div>
<svg style="left:322px;top:136px" width="17" height="16" viewBox="0 0 17 16"><path d="M1,1 H6.5 L8,3 H16 V15 H1 Z" fill="#e9b53a"/><path d="M1,4.5 H16 V15 H1 Z" fill="#fbd55f"/><g transform="translate(0,1)"><path d="M12,0.6 L13.3,3.6 L16.5,3.9 L14.1,6 L14.8,9.2 L12,7.5 L9.2,9.2 L9.9,6 L7.5,3.9 L10.7,3.6 Z" fill="#fff" stroke="#8d99a6" stroke-width=".8"/></g></svg>
<span class="t" style="top:134.75px;font:400 14px/20px 'Liberation Sans',sans-serif;color:#111;left:346.00px;transform-origin:0 0;transform:scaleX(0.9283);">New</span>
<svg style="left:376px;top:142px" width="8" height="5" viewBox="0 0 8 5"><path d="M0,0 H8 L4,4.5 Z" fill="#000"/></svg>
<svg style="left:393px;top:135px" width="3" height="20" viewBox="0 0 3 20"><rect x="0" y="0" width="3" height="1" fill="#b4b4b4"/><rect x="0" y="2" width="3" height="1" fill="#b4b4b4"/><rect x="0" y="4" width="3" height="1" fill="#b4b4b4"/><rect x="0" y="6" width="3" height="1" fill="#b4b4b4"/><rect x="0" y="8" width="3" height="1" fill="#b4b4b4"/><rect x="0" y="10" width="3" height="1" fill="#b4b4b4"/><rect x="0" y="12" width="3" height="1" fill="#b4b4b4"/><rect x="0" y="14" width="3" height="1" fill="#b4b4b4"/><rect x="0" y="16" width="3" height="1" fill="#b4b4b4"/><rect x="0" y="18" width="3" height="1" fill="#b4b4b4"/></svg>
<svg style="left:402px;top:137px" width="14" height="14" viewBox="0 0 14 14"><rect x="0.5" y="0.5" width="13" height="13" fill="#fff" stroke="#8e9aa5"/><path d="M3,7 H11 M7,3 V11" stroke="#1e9ac2" stroke-width="1.8"/></svg>
<svg style="left:426px;top:137px" width="14" height="14" viewBox="0 0 14 14"><rect x="0.5" y="0.5" width="13" height="13" fill="#f6f6f6" stroke="#d0d0d0"/><path d="M3,7 H11" stroke="#d0d0d0" stroke-width="1.8"/></svg>
<svg style="left:449px;top:137px" width="14" height="14" viewBox="0 0 14 14"><rect x="0.5" y="0.5" width="13" height="13" fill="#fff" stroke="#8e9aa5"/><path d="M3,3.5 H11 L7,11 Z" fill="none" stroke="#1e9ac2" stroke-width="1.6"/></svg>
<svg style="left:1161px;top:135px" width="3" height="20" viewBox="0 0 3 20"><rect x="0" y="0" width="3" height="1" fill="#b4b4b4"/><rect x="0" y="2" width="3" height="1" fill="#b4b4b4"/><rect x="0" y="4" width="3" height="1" fill="#b4b4b4"/><rect x="0" y="6" width="3" height="1" fill="#b4b4b4"/><rect x="0" y="8" width="3" height="1" fill="#b4b4b4"/><rect x="0" y="10" width="3" height="1" fill="#b4b4b4"/><rect x="0" y="12" width="3" height="1" fill="#b4b4b4"/><rect x="0" y="14" width="3" height="1" fill="#b4b4b4"/><rect x="0" y="16" width="3" height="1" fill="#b4b4b4"/><rect x="0" y="18" width="3" height="1" fill="#b4b4b4"/></svg>
<svg style="left:1169px;top:136px" width="17" height="17" viewBox="0 0 17 17"><rect x="5.5" y="0.5" width="9" height="11" fill="#ececec" stroke="#c4c4c4"/><rect x="1.5" y="3.5" width="9" height="12" fill="#e4e4e4" stroke="#bdbdbd"/><path d="M3,7 H9 M3,9 H9 M3,11 H9 M3,13 H9" stroke="#c9c9c9"/></svg>
<span class="t" style="top:134.75px;font:400 14px/20px 'Liberation Sans',sans-serif;color:#a3a3a3;left:1190.00px;transform-origin:0 0;transform:scaleX(0.9958);">Download</span>
<svg style="left:1259px;top:142px" width="8" height="5" viewBox="0 0 8 5"><path d="M0,0 H8 L4,4.5 Z" fill="#b0b0b0"/></svg>
<div style="left:1274px;top:132px;width:1px;height:24px;background:#c5c5c5;"></div>
<svg style="left:1281px;top:136px" width="17" height="17" viewBox="0 0 17 17"><rect x="1.5" y="2.5" width="11" height="12" fill="#f4f4f4" stroke="#c6c6c6"/><path d="M5,11 L13,2 L15,3.5 L7,12.5 Z" fill="#d5d5d5" stroke="#bdbdbd" stroke-width=".6"/></svg>
<span class="t" style="top:134.75px;font:400 14px/20px 'Liberation Sans',sans-serif;color:#a3a3a3;left:1302.80px;transform-origin:0 0;transform:scaleX(0.8995);">Edit</span>
<svg style="left:1332px;top:142px" width="8" height="5" viewBox="0 0 8 5"><path d="M0,0 H8 L4,4.5 Z" fill="#b0b0b0"/></svg>
<svg style="left:1349px;top:138px" width="13" height="13" viewBox="0 0 13 13"><path d="M1.5,1.5 L11.5,11.5 M11.5,1.5 L1.5,11.5" stroke="#b5b5b5" stroke-width="1.8"/></svg>
<svg style="left:1370px;top:136px" width="17" height="17" viewBox="0 0 17 17"><rect x="1.5" y="9.5" width="13" height="5" fill="#f4f4f4" stroke="#c9c9c9"/><path d="M5,11 L13,1.5 L15,3 L7,12.5 Z" fill="#d5d5d5" stroke="#c2c2c2" stroke-width=".6"/></svg>
<svg style="left:1394px;top:136px" width="17" height="17" viewBox="0 0 17 17"><path d="M1.5,1.5 H8 L11,4.5 V13.5 H1.5 Z" fill="#f4f4f4" stroke="#c6c6c6"/><rect x="6.5" y="7.5" width="8" height="8" fill="#f4f4f4" stroke="#c6c6c6"/><path d="M8.5,11.5 L10,13.5 L13,9.5" fill="none" stroke="#c2c2c2" stroke-width="1.3"/></svg>
<span class="t" style="top:134.75px;font:400 14px/20px 'Liberation Sans',sans-serif;color:#a3a3a3;left:1414.00px;transform-origin:0 0;transform:scaleX(0.9716);">Properties</span>
<svg style="left:1483px;top:142px" width="8" height="5" viewBox="0 0 8 5"><path d="M0,0 H8 L4,4.5 Z" fill="#b0b0b0"/></svg>
<div style="left:1498px;top:132px;width:1px;height:24px;background:#c5c5c5;"></div>
<svg style="left:1503px;top:136px" width="17" height="16" viewBox="0 0 17 16"><path d="M1,1 H6.5 L8,3 H16 V15 H1 Z" fill="#e9b53a"/><path d="M1,4.5 H16 V15 H1 Z" fill="#fbd55f"/><g transform="translate(0,1)"><path d="M12,0.6 L13.3,3.6 L16.5,3.9 L14.1,6 L14.8,9.2 L12,7.5 L9.2,9.2 L9.9,6 L7.5,3.9 L10.7,3.6 Z" fill="#fff" stroke="#8d99a6" stroke-width=".8"/></g></svg>
<span class="t" style="top:134.75px;font:400 14px/20px 'Liberation Sans',sans-serif;color:#111;left:1527.00px;transform-origin:0 0;transform:scaleX(0.9283);">New</span>
<svg style="left:1557px;top:142px" width="8" height="5" viewBox="0 0 8 5"><path d="M0,0 H8 L4,4.5 Z" fill="#000"/></svg>
<svg style="left:1574px;top:135px" width="3" height="20" viewBox="0 0 3 20"><rect x="0" y="0" width="3" height="1" fill="#b4b4b4"/><rect x="0" y="2" width="3" height="1" fill="#b4b4b4"/><rect x="0" y="4" width="3" height="1" fill="#b4b4b4"/><rect x="0" y="6" width="3" height="1" fill="#b4b4b4"/><rect x="0" y="8" width="3" height="1" fill="#b4b4b4"/><rect x="0" y="10" width="3" height="1" fill="#b4b4b4"/><rect x="0" y="12" width="3" height="1" fill="#b4b4b4"/><rect x="0" y="14" width="3" height="1" fill="#b4b4b4"/><rect x="0" y="16" width="3" height="1" fill="#b4b4b4"/><rect x="0" y="18" width="3" height="1" fill="#b4b4b4"/></svg>
<svg style="left:1583px;top:137px" width="14" height="14" viewBox="0 0 14 14"><rect x="0.5" y="0.5" width="13" height="13" fill="#fff" stroke="#8e9aa5"/><path d="M3,7 H11 M7,3 V11" stroke="#1e9ac2" stroke-width="1.8"/></svg>
<svg style="left:1607px;top:137px" width="14" height="14" viewBox="0 0 14 14"><rect x="0.5" y="0.5" width="13" height="13" fill="#f6f6f6" stroke="#d0d0d0"/><path d="M3,7 H11" stroke="#d0d0d0" stroke-width="1.8"/></svg>
<svg style="left:1630px;top:137px" width="14" height="14" viewBox="0 0 14 14"><rect x="0.5" y="0.5" width="13" height="13" fill="#fff" stroke="#8e9aa5"/><path d="M3,3.5 H11 L7,11 Z" fill="none" stroke="#1e9ac2" stroke-width="1.6"/></svg>
<div style="left:0px;top:159px;width:1150px;height:26px;background:#bfcddb;"></div>
<div style="left:1157px;top:159px;width:1158px;height:26px;background:#bfcddb;"></div>
<div style="left:0px;top:184px;width:1150px;height:1px;background:#8b959f;"></div>
<div style="left:1157px;top:184px;width:1158px;height:1px;background:#8b959f;"></div>
<div style="left:1150px;top:159px;width:1px;height:462px;background:#7f7f7f;"></div>
<span class="t" style="top:162.15px;font:400 14px/20px 'Liberation Sans',sans-serif;color:#111;left:-2.00px;transform-origin:0 0;transform:scaleX(1.0069);">D:\Documents\Web ADA\</span>
<span class="t" style="top:162.15px;font:400 14px/20px 'Liberation Sans',sans-serif;color:#111;left:1162.00px;transform-origin:0 0;transform:scaleX(1.0216);">/home/fkleinha/</span>
<div style="left:0px;top:185px;width:1150px;height:435px;background:#fff;"></div>
<div style="left:0px;top:620px;width:1150px;height:1px;background:#828282;"></div>
<div style="left:280px;top:186px;width:1px;height:434px;background:#ececec;"></div>
<div style="left:360px;top:186px;width:1px;height:434px;background:#ececec;"></div>
<div style="left:498px;top:186px;width:1px;height:434px;background:#ececec;"></div>
<div style="left:670px;top:186px;width:1px;height:434px;background:#ececec;"></div>
<span class="t" style="top:188.15px;font:400 14px/20px 'Liberation Sans',sans-serif;color:#1a1a1a;left:2.00px;transform-origin:0 0;transform:scaleX(0.9559);">Name</span>
<span class="t" style="top:188.15px;font:400 14px/20px 'Liberation Sans',sans-serif;color:#1a1a1a;left:332.50px;transform-origin:0 0;transform:scaleX(0.8261);">Size</span>
<span class="t" style="top:188.15px;font:400 14px/20px 'Liberation Sans',sans-serif;color:#1a1a1a;left:367.00px;transform-origin:0 0;transform:scaleX(0.9225);">Type</span>
<span class="t" style="top:188.15px;font:400 14px/20px 'Liberation Sans',sans-serif;color:#1a1a1a;left:505.00px;transform-origin:0 0;transform:scaleX(0.9678);">Changed</span>
<svg style="left:134px;top:186px" width="10" height="5" viewBox="0 0 10 5"><path d="M1,4.5 L5,0.8 L9,4.5" fill="none" stroke="#555" stroke-width="1.1"/></svg>
<svg style="left:3px;top:213px" width="11" height="15" viewBox="0 0 11 15"><path d="M0.3,1 H4.6 L5.6,2.4 H9.800 V15 H0.3 Z" fill="#f9d463"/><path d="M4,11.5 V6 M2,8 L4,5.5 L6,8 M4,11.5 H9" stroke="#3a3000" stroke-width="1.3" fill="none"/></svg>
<span class="t" style="top:212.15px;font:400 14px/20px 'Liberation Sans',sans-serif;color:#111;left:20.40px;transform-origin:0 0;transform:scaleX(0.7199);">..</span>
<span class="t" style="top:212.15px;font:400 14px/20px 'Liberation Sans',sans-serif;color:#111;left:367.00px;transform-origin:0 0;transform:scaleX(0.9917);">Parent directory</span>
<span class="t" style="top:212.15px;font:400 14px/20px 'Liberation Sans',sans-serif;color:#111;left:505.50px;transform-origin:0 0;transform:scaleX(1.0210);">11/26/2023 10:44:24 PM</span>
<svg style="left:3px;top:236px" width="11" height="15" viewBox="0 0 11 15"><defs><linearGradient id="sf" x1="0" x2="1"><stop offset="0" stop-color="#fde9a4"/><stop offset="1" stop-color="#f5c94f"/></linearGradient></defs><path d="M0.3,1 H4.6 L5.6,2.4 H9.800 V14 H0.3 Z" fill="url(#sf)"/></svg>
<span class="t" style="top:235.15px;font:400 14px/20px 'Liberation Sans',sans-serif;color:#111;left:20.40px;transform-origin:0 0;transform:scaleX(0.8563);">BYA</span>
<span class="t" style="top:235.15px;font:400 14px/20px 'Liberation Sans',sans-serif;color:#111;left:367.00px;transform-origin:0 0;transform:scaleX(0.9598);">File folder</span>
<span class="t" style="top:235.15px;font:400 14px/20px 'Liberation Sans',sans-serif;color:#111;left:505.50px;transform-origin:0 0;transform:scaleX(1.0248);">11/27/2023 3:43:49 PM</span>
<svg style="left:3px;top:259px" width="11" height="15" viewBox="0 0 11 15"><defs><linearGradient id="sf" x1="0" x2="1"><stop offset="0" stop-color="#fde9a4"/><stop offset="1" stop-color="#f5c94f"/></linearGradient></defs><path d="M0.3,1 H4.6 L5.6,2.4 H9.800 V14 H0.3 Z" fill="url(#sf)"/></svg>
<span class="t" style="top:258.15px;font:400 14px/20px 'Liberation Sans',sans-serif;color:#111;left:20.40px;transform-origin:0 0;transform:scaleX(0.9468);">Starman</span>
<span class="t" style="top:258.15px;font:400 14px/20px 'Liberation Sans',sans-serif;color:#111;left:367.00px;transform-origin:0 0;transform:scaleX(0.9598);">File folder</span>
<span class="t" style="top:258.15px;font:400 14px/20px 'Liberation Sans',sans-serif;color:#111;left:505.50px;transform-origin:0 0;transform:scaleX(1.0155);">1/7/2024 1:21:53 PM</span>
<svg style="left:3px;top:282.5px" width="12" height="16" viewBox="0 0 12 16"><path d="M0.5,0.5 H8 L11.5,4 V15.5 H0.5 Z" fill="#2b1f5c"/><circle cx="6" cy="9" r="4" fill="#ff7139"/><circle cx="5.5" cy="9.5" r="2.2" fill="#ffd43b"/><path d="M3,12 a4,4 0 0 0 6,0" fill="#b833e1"/></svg>
<span class="t" style="top:281.15px;font:400 14px/20px 'Liberation Sans',sans-serif;color:#111;left:20.40px;transform-origin:0 0;transform:scaleX(0.9748);">index.html</span>
<span class="t" style="top:281.15px;font:400 14px/20px 'Liberation Sans',sans-serif;color:#111;left:324.70px;transform-origin:0 0;transform:scaleX(0.9126);">4 KB</span>
<span class="t" style="top:281.15px;font:400 14px/20px 'Liberation Sans',sans-serif;color:#111;left:367.00px;transform-origin:0 0;transform:scaleX(0.9461);">Firefox HTML Doc...</span>
<span class="t" style="top:281.15px;font:400 14px/20px 'Liberation Sans',sans-serif;color:#111;left:505.50px;transform-origin:0 0;transform:scaleX(1.0328);">1/7/2024 12:00:31 AM</span>
<div style="left:0px;top:621px;width:2315px;height:25px;background:#f0f0f0;"></div>
<div style="left:0px;top:645px;width:2315px;height:1px;background:#fbfbfb;"></div>
<div style="left:0px;top:646px;width:2315px;height:21px;background:#f0f0f0;"></div>
<span class="t" style="top:624.15px;font:400 14px/20px 'Liberation Sans',sans-serif;color:#111;left:-2.00px;transform-origin:0 0;transform:scaleX(0.9793);">0 B of 3.43 KB in 0 of 3</span>
<div style="left:2113px;top:648px;width:1px;height:18px;background:#dcdcdc;"></div>
<div style="left:2189px;top:648px;width:1px;height:18px;background:#dcdcdc;"></div>
<div style="left:2227px;top:648px;width:1px;height:18px;background:#dcdcdc;"></div>
<span class="t" style="top:646.15px;font:400 14px/20px 'Liberation Sans',sans-serif;color:#111;left:2129.50px;transform-origin:0 0;transform:scaleX(0.8708);">SFTP-3</span>
<span class="t" style="top:646.15px;font:400 14px/20px 'Liberation Sans',sans-serif;color:#111;left:2247.00px;transform-origin:0 0;transform:scaleX(0.9741);">0:01:45</span>
<svg style="left:2200px;top:648px" width="15" height="17" viewBox="0 0 15 17"><path d="M4,8 V5.5 a3.5,3.5 0 0 1 7,0 V8" fill="none" stroke="#c9a227" stroke-width="1.6"/><rect x="2" y="7.5" width="11" height="8.5" rx="1" fill="#f3c73a" stroke="#c79a12" stroke-width=".8"/></svg>
<svg style="left:2298px;top:655px" width="12" height="12" viewBox="0 0 12 12"><rect x="8" y="0" width="2" height="2" fill="#b5b5b5"/><rect x="4" y="4" width="2" height="2" fill="#b5b5b5"/><rect x="8" y="4" width="2" height="2" fill="#b5b5b5"/><rect x="0" y="8" width="2" height="2" fill="#b5b5b5"/><rect x="4" y="8" width="2" height="2" fill="#b5b5b5"/><rect x="8" y="8" width="2" height="2" fill="#b5b5b5"/></svg>
<div style="left:1157px;top:185px;width:342px;height:436px;background:#fff;border:1px solid #828282;border-top:0"></div>
<div style="left:1502px;top:185px;width:811px;height:436px;background:#fff;border:1px solid #828282;border-top:0"></div>
<svg style="left:1165.5px;top:194.5px" width="10" height="7" viewBox="0 0 10 7"><path d="M1.2,1.2 L5,5 L8.800,1.2" fill="none" stroke="#2e2e2e" stroke-width="1.9"/></svg>
<svg style="left:1184px;top:189px" width="11" height="15" viewBox="0 0 11 15"><defs><linearGradient id="sf" x1="0" x2="1"><stop offset="0" stop-color="#fde9a4"/><stop offset="1" stop-color="#f5c94f"/></linearGradient></defs><path d="M0.3,1 H4.6 L5.6,2.4 H9.800 V14 H0.3 Z" fill="url(#sf)"/></svg>
<span class="t" style="top:187.15px;font:400 14px/20px 'Liberation Sans',sans-serif;color:#111;left:1204.00px;transform-origin:0 0;transform:scaleX(1.1087);">/ &lt;root&gt;</span>
<svg style="left:1184.5px;top:216.5px" width="10" height="7" viewBox="0 0 10 7"><path d="M1.2,1.2 L5,5 L8.800,1.2" fill="none" stroke="#2e2e2e" stroke-width="1.9"/></svg>
<svg style="left:1203px;top:211px" width="11" height="15" viewBox="0 0 11 15"><defs><linearGradient id="sf" x1="0" x2="1"><stop offset="0" stop-color="#fde9a4"/><stop offset="1" stop-color="#f5c94f"/></linearGradient></defs><path d="M0.3,1 H4.6 L5.6,2.4 H9.800 V14 H0.3 Z" fill="url(#sf)"/></svg>
<span class="t" style="top:209.15px;font:400 14px/20px 'Liberation Sans',sans-serif;color:#111;left:1223.50px;transform-origin:0 0;transform:scaleX(0.9851);">home</span>
<div style="left:1217px;top:230px;width:75px;height:22px;background:#d9d9d9;"></div>
<svg style="left:1203.5px;top:238.5px" width="10" height="7" viewBox="0 0 10 7"><path d="M1.2,1.2 L5,5 L8.800,1.2" fill="none" stroke="#2e2e2e" stroke-width="1.9"/></svg>
<svg style="left:1222.5px;top:233px" width="11" height="15" viewBox="0 0 11 15"><defs><linearGradient id="sf" x1="0" x2="1"><stop offset="0" stop-color="#fde9a4"/><stop offset="1" stop-color="#f5c94f"/></linearGradient></defs><path d="M0.3,1 H4.6 L5.6,2.4 H9.800 V14 H0.3 Z" fill="url(#sf)"/></svg>
<span class="t" style="top:231.15px;font:400 14px/20px 'Liberation Sans',sans-serif;color:#111;left:1242.00px;transform-origin:0 0;transform:scaleX(0.9636);">fkleinha</span>
<svg style="left:1241px;top:255px" width="11" height="15" viewBox="0 0 11 15"><defs><linearGradient id="sf" x1="0" x2="1"><stop offset="0" stop-color="#fde9a4"/><stop offset="1" stop-color="#f5c94f"/></linearGradient></defs><path d="M0.3,1 H4.6 L5.6,2.4 H9.800 V14 H0.3 Z" fill="url(#sf)"/></svg>
<span class="t" style="top:253.15px;font:400 14px/20px 'Liberation Sans',sans-serif;color:#757575;left:1261.00px;transform-origin:0 0;transform:scaleX(0.8970);">.cache</span>
<div style="left:1189px;top:207px;width:1px;height:5px;background:repeating-linear-gradient(180deg,#999 0 1px,transparent 1px 2px);"></div>
<div style="left:1209px;top:229px;width:1px;height:5px;background:repeating-linear-gradient(180deg,#999 0 1px,transparent 1px 2px);"></div>
<div style="left:1178px;top:197px;width:2px;height:1px;background:#aaa;"></div>
<div style="left:1197px;top:220px;width:2px;height:1px;background:#aaa;"></div>
<div style="left:1216px;top:241px;width:2px;height:1px;background:#aaa;"></div>
<div style="left:1228px;top:252px;width:1px;height:12px;background:repeating-linear-gradient(180deg,#999 0 1px,transparent 1px 2px);"></div>
<div style="left:1228px;top:263px;width:9px;height:1px;background:repeating-linear-gradient(90deg,#999 0 1px,transparent 1px 2px);"></div>
<div style="left:1848px;top:186px;width:1px;height:434px;background:#ececec;"></div>
<div style="left:1928px;top:186px;width:1px;height:434px;background:#ececec;"></div>
<div style="left:2100px;top:186px;width:1px;height:434px;background:#ececec;"></div>
<div style="left:2191px;top:186px;width:1px;height:434px;background:#ececec;"></div>
<div style="left:2262px;top:186px;width:1px;height:434px;background:#ececec;"></div>
<span class="t" style="top:188.15px;font:400 14px/20px 'Liberation Sans',sans-serif;color:#1a1a1a;left:1510.00px;transform-origin:0 0;transform:scaleX(0.9372);">Name</span>
<span class="t" style="top:188.15px;font:400 14px/20px 'Liberation Sans',sans-serif;color:#1a1a1a;left:1900.60px;transform-origin:0 0;transform:scaleX(0.8151);">Size</span>
<span class="t" style="top:188.15px;font:400 14px/20px 'Liberation Sans',sans-serif;color:#1a1a1a;left:1935.00px;transform-origin:0 0;transform:scaleX(0.9590);">Changed</span>
<span class="t" style="top:188.15px;font:400 14px/20px 'Liberation Sans',sans-serif;color:#1a1a1a;left:2107.00px;transform-origin:0 0;transform:scaleX(0.9450);">Rights</span>
<span class="t" style="top:188.15px;font:400 14px/20px 'Liberation Sans',sans-serif;color:#1a1a1a;left:2198.00px;transform-origin:0 0;transform:scaleX(0.9943);">Owner</span>
<svg style="left:1671px;top:186px" width="10" height="5" viewBox="0 0 10 5"><path d="M1,4.5 L5,0.8 L9,4.5" fill="none" stroke="#555" stroke-width="1.1"/></svg>
<svg style="left:1511px;top:213px" width="11" height="15" viewBox="0 0 11 15"><path d="M0.3,1 H4.6 L5.6,2.4 H9.800 V15 H0.3 Z" fill="#f9d463"/><path d="M4,11.5 V6 M2,8 L4,5.5 L6,8 M4,11.5 H9" stroke="#3a3000" stroke-width="1.3" fill="none"/></svg>
<span class="t" style="top:212.15px;font:400 14px/20px 'Liberation Sans',sans-serif;color:#000;left:1528.40px;transform-origin:0 0;transform:scaleX(0.6813);">..</span>
<span class="t" style="top:212.15px;font:400 14px/20px 'Liberation Sans',sans-serif;color:#000;left:1936.00px;transform-origin:0 0;transform:scaleX(1.0089);">1/14/2024 3:10:42 PM</span>
<span class="t" style="top:212.15px;font:400 14px/20px 'Liberation Sans',sans-serif;color:#000;left:2107.00px;transform-origin:0 0;transform:scaleX(1.0106);">rwxr-xr-x</span>
<span class="t" style="top:212.15px;font:400 14px/20px 'Liberation Sans',sans-serif;color:#000;left:2198.00px;transform-origin:0 0;transform:scaleX(1.0570);">root</span>
<svg style="left:1511px;top:236px" width="11" height="15" viewBox="0 0 11 15"><defs><linearGradient id="sf" x1="0" x2="1"><stop offset="0" stop-color="#fde9a4"/><stop offset="1" stop-color="#f5c94f"/></linearGradient></defs><path d="M0.3,1 H4.6 L5.6,2.4 H9.800 V14 H0.3 Z" fill="url(#sf)"/></svg>
<span class="t" style="top:235.15px;font:400 14px/20px 'Liberation Sans',sans-serif;color:#757575;left:1528.40px;transform-origin:0 0;transform:scaleX(0.8825);">.cache</span>
<span class="t" style="top:235.15px;font:400 14px/20px 'Liberation Sans',sans-serif;color:#757575;left:1936.00px;transform-origin:0 0;transform:scaleX(1.0222);">1/13/2024 12:49:33 AM</span>
<span class="t" style="top:235.15px;font:400 14px/20px 'Liberation Sans',sans-serif;color:#757575;left:2107.00px;transform-origin:0 0;transform:scaleX(1.1256);">rwx------</span>
<span class="t" style="top:235.15px;font:400 14px/20px 'Liberation Sans',sans-serif;color:#757575;left:2198.00px;transform-origin:0 0;transform:scaleX(0.9532);">fkleinha</span>
<svg style="left:1510.5px;top:258.8px" width="12" height="16" viewBox="0 0 12 16"><path d="M1.5,0.5 H7.5 L10.5,3.5 V15.5 H1.5 Z" fill="#fff" stroke="#b5b5b5"/><path d="M7.5,0.5 V3.5 H10.5" fill="none" stroke="#b5b5b5"/></svg>
<span class="t" style="top:258.15px;font:400 14px/20px 'Liberation Sans',sans-serif;color:#757575;left:1528.40px;transform-origin:0 0;transform:scaleX(0.9616);">.bash_logout</span>
<span class="t" style="top:258.15px;font:400 14px/20px 'Liberation Sans',sans-serif;color:#757575;left:1890.65px;transform-origin:100% 0;transform:scaleX(0.9500);">1 KB</span>
<span class="t" style="top:258.15px;font:400 14px/20px 'Liberation Sans',sans-serif;color:#757575;left:1936.00px;transform-origin:0 0;transform:scaleX(1.0089);">12/8/2022 3:17:59 PM</span>
<span class="t" style="top:258.15px;font:400 14px/20px 'Liberation Sans',sans-serif;color:#757575;left:2107.00px;transform-origin:0 0;transform:scaleX(1.1390);">rw-r--r--</span>
<span class="t" style="top:258.15px;font:400 14px/20px 'Liberation Sans',sans-serif;color:#757575;left:2198.00px;transform-origin:0 0;transform:scaleX(0.9532);">fkleinha</span>
<svg style="left:1510.5px;top:281.8px" width="12" height="16" viewBox="0 0 12 16"><path d="M1.5,0.5 H7.5 L10.5,3.5 V15.5 H1.5 Z" fill="#fff" stroke="#b5b5b5"/><path d="M7.5,0.5 V3.5 H10.5" fill="none" stroke="#b5b5b5"/></svg>
<span class="t" style="top:281.15px;font:400 14px/20px 'Liberation Sans',sans-serif;color:#757575;left:1528.40px;transform-origin:0 0;transform:scaleX(0.9322);">.bashrc</span>
<span class="t" style="top:281.15px;font:400 14px/20px 'Liberation Sans',sans-serif;color:#757575;left:1890.65px;transform-origin:100% 0;transform:scaleX(0.9500);">4 KB</span>
<span class="t" style="top:281.15px;font:400 14px/20px 'Liberation Sans',sans-serif;color:#757575;left:1936.00px;transform-origin:0 0;transform:scaleX(1.0089);">12/8/2022 3:17:59 PM</span>
<span class="t" style="top:281.15px;font:400 14px/20px 'Liberation Sans',sans-serif;color:#757575;left:2107.00px;transform-origin:0 0;transform:scaleX(1.1390);">rw-r--r--</span>
<span class="t" style="top:281.15px;font:400 14px/20px 'Liberation Sans',sans-serif;color:#757575;left:2198.00px;transform-origin:0 0;transform:scaleX(0.9532);">fkleinha</span>
<svg style="left:1510.5px;top:304.8px" width="12" height="16" viewBox="0 0 12 16"><path d="M1.5,0.5 H7.5 L10.5,3.5 V15.5 H1.5 Z" fill="#fff" stroke="#b5b5b5"/><path d="M7.5,0.5 V3.5 H10.5" fill="none" stroke="#b5b5b5"/></svg>
<span class="t" style="top:304.15px;font:400 14px/20px 'Liberation Sans',sans-serif;color:#757575;left:1528.40px;transform-origin:0 0;transform:scaleX(0.9374);">.kshrc</span>
<span class="t" style="top:304.15px;font:400 14px/20px 'Liberation Sans',sans-serif;color:#757575;left:1890.65px;transform-origin:100% 0;transform:scaleX(0.9500);">3 KB</span>
<span class="t" style="top:304.15px;font:400 14px/20px 'Liberation Sans',sans-serif;color:#757575;left:1936.00px;transform-origin:0 0;transform:scaleX(1.0089);">12/8/2022 3:17:59 PM</span>
<span class="t" style="top:304.15px;font:400 14px/20px 'Liberation Sans',sans-serif;color:#757575;left:2107.00px;transform-origin:0 0;transform:scaleX(1.1390);">rw-r--r--</span>
<span class="t" style="top:304.15px;font:400 14px/20px 'Liberation Sans',sans-serif;color:#757575;left:2198.00px;transform-origin:0 0;transform:scaleX(0.9532);">fkleinha</span>
<svg style="left:1510.5px;top:327.8px" width="12" height="16" viewBox="0 0 12 16"><path d="M1.5,0.5 H7.5 L10.5,3.5 V15.5 H1.5 Z" fill="#fff" stroke="#b5b5b5"/><path d="M7.5,0.5 V3.5 H10.5" fill="none" stroke="#b5b5b5"/></svg>
<span class="t" style="top:327.15px;font:400 14px/20px 'Liberation Sans',sans-serif;color:#757575;left:1528.40px;transform-origin:0 0;transform:scaleX(0.9614);">.profile</span>
<span class="t" style="top:327.15px;font:400 14px/20px 'Liberation Sans',sans-serif;color:#757575;left:1890.65px;transform-origin:100% 0;transform:scaleX(0.9500);">1 KB</span>
<span class="t" style="top:327.15px;font:400 14px/20px 'Liberation Sans',sans-serif;color:#757575;left:1936.00px;transform-origin:0 0;transform:scaleX(1.0089);">12/8/2022 3:17:59 PM</span>
<span class="t" style="top:327.15px;font:400 14px/20px 'Liberation Sans',sans-serif;color:#757575;left:2107.00px;transform-origin:0 0;transform:scaleX(1.1390);">rw-r--r--</span>
<span class="t" style="top:327.15px;font:400 14px/20px 'Liberation Sans',sans-serif;color:#757575;left:2198.00px;transform-origin:0 0;transform:scaleX(0.9532);">fkleinha</span>
<div style="left:2313px;top:4px;width:1px;height:663px;background:#7d7d7d;"></div>
<div style="left:2314px;top:5px;width:1px;height:662px;background:#e4e4e4;"></div>
<div style="left:616px;top:347px;width:723px;height:542px;background:transparent;box-shadow:0 2px 17px 0 rgba(0,0,0,.26)"></div>
<div style="left:616px;top:347px;width:723px;height:542px;background:#f0f0f0;border:1px solid #9bb7ae"></div>
<div style="left:616px;top:347px;width:723px;height:34.5px;background:#a8c4bb;"></div>
<svg style="left:627px;top:356px" width="17" height="17" viewBox="0 0 17 17"><path d="M1.5,0.5 H8 L11.5,4 V14.5 H1.5 Z" fill="#fff" stroke="#8a97a3"/><path d="M3.5,4.5 H8 M3.5,6.5 H9 M3.5,8.5 H7" stroke="#9fb0bd"/><circle cx="9" cy="9" r="3.6" fill="#d7eefa" stroke="#4a5a66" stroke-width="1.1"/><path d="M11.5,11.5 L15.5,15.5" stroke="#333" stroke-width="2"/></svg>
<span class="t" style="top:355.15px;font:400 14px/20px 'Liberation Sans',sans-serif;color:#111;left:649.00px;transform-origin:0 0;transform:scaleX(0.9554);">Find – fkleinha</span>
<svg style="left:1204px;top:358px" width="12" height="12" viewBox="0 0 12 12"><path d="M0,6.5 H11" stroke="#000" stroke-width="1.2"/></svg>
<svg style="left:1255px;top:358px" width="12" height="12" viewBox="0 0 12 12"><rect x="1.5" y="1.5" width="9" height="9" fill="none" stroke="#000" stroke-width="1.2"/></svg>
<svg style="left:1307px;top:358px" width="13" height="13" viewBox="0 0 13 13"><path d="M1,1 L11.5,11.5 M11.5,1 L1,11.5" stroke="#000" stroke-width="1.2"/></svg>
<div style="left:626px;top:396px;width:584px;height:127px;background:transparent;border:1px solid #dcdcdc"></div>
<div style="left:631px;top:388px;width:32px;height:16px;background:#f0f0f0;"></div>
<span class="t" style="top:388.24px;font:400 12.3px/17px 'Liberation Sans',sans-serif;color:#111;left:634.00px;transform-origin:0 0;transform:scaleX(0.9512);">Filter</span>
<svg style="left:639px;top:413px" width="32" height="34" viewBox="0 0 32 34"><path d="M1.5,3.5 H13 L17.500,8 V25.5 H1.5 Z" fill="#fff" stroke="#9aa5ae"/><path d="M4,1.500 H15 L20,6.5" fill="none" stroke="#9aa5ae"/><path d="M4,9.5 H13 M4,12.5 H13 M4,15.5 H10 M4,18.5 H9" stroke="#b5c0c9"/><circle cx="17.500" cy="18.500" r="8.500" fill="#d4edf9" stroke="#4b5c68" stroke-width="1.5"/><path d="M13,16 H22 M13,19 H22 M14,22 H21" stroke="#9cc5dc"/><path d="M24,25 L29.500,30.500" stroke="#222" stroke-width="3" stroke-linecap="round"/></svg>
<span class="t" style="top:410.24px;font:400 12.3px/17px 'Liberation Sans',sans-serif;color:#111;left:679.00px;transform-origin:0 0;transform:scaleX(0.9279);">File mask:</span>
<div style="left:679px;top:427px;width:427px;height:22px;background:#fff;border:1px solid #7a7a7a"></div>
<span class="t" style="top:430.24px;font:400 12.3px/17px 'Liberation Sans',sans-serif;color:#111;left:682.00px;transform-origin:0 0;transform:scaleX(0.9680);">Starman</span>
<svg style="left:1091px;top:435px" width="10" height="6" viewBox="0 0 10 6"><path d="M1.2,1 L5,4.800 L8.800,1" fill="none" stroke="#444" stroke-width="1.2"/></svg>
<div style="left:1113px;top:426px;width:85px;height:25px;background:#e1e1e1;border:1px solid #adadad"></div>
<span class="t" style="top:431.24px;font:400 12.3px/17px 'Liberation Sans',sans-serif;color:#111;left:1139.00px;transform-origin:0 0;transform:scaleX(1.0176);">Edit...</span>
<span class="t" style="top:452.24px;font:400 12.3px/17px 'Liberation Sans',sans-serif;color:#111;left:1049.00px;transform-origin:0 0;transform:scaleX(0.9696);">mask hints</span>
<div style="left:1049px;top:466px;width:57px;height:1px;background:repeating-linear-gradient(90deg,#000 0 2px,transparent 2px 3px);"></div>
<span class="t" style="top:464.24px;font:400 12.3px/17px 'Liberation Sans',sans-serif;color:#111;left:679.00px;transform-origin:0 0;transform:scaleX(0.9751);">Search in:</span>
<div style="left:679px;top:482px;width:520px;height:22px;background:#fff;border:1px solid #7a7a7a"></div>
<span class="t" style="top:485.24px;font:400 12.3px/17px 'Liberation Sans',sans-serif;color:#111;left:682.00px;transform-origin:0 0;transform:scaleX(1.0250);">/home/fkleinha</span>
<svg style="left:1184px;top:490px" width="10" height="6" viewBox="0 0 10 6"><path d="M1.2,1 L5,4.800 L8.800,1" fill="none" stroke="#444" stroke-width="1.2"/></svg>
<div style="left:1217px;top:395px;width:115px;height:25px;background:#e5f1fb;border:2px solid #0078d7"></div>
<span class="t" style="top:400.24px;font:400 12.3px/17px 'Liberation Sans',sans-serif;color:#111;left:1260.00px;transform-origin:0 0;transform:scaleX(1.0779);">Start</span>
<div style="left:1217px;top:428.5px;width:115px;height:24.5px;background:#e1e1e1;border:1px solid #adadad"></div>
<span class="t" style="top:433.24px;font:400 12.3px/17px 'Liberation Sans',sans-serif;color:#111;left:1262.00px;transform-origin:0 0;transform:scaleX(0.9487);">Help</span>
<div style="left:1217px;top:536px;width:115px;height:25px;background:#cccccc;border:1px solid #bfbfbf"></div>
<span class="t" style="top:541.24px;font:400 12.3px/17px 'Liberation Sans',sans-serif;color:#838383;left:1259.00px;transform-origin:0 0;transform:scaleX(0.9255);">Focus</span>
<div style="left:1217px;top:569px;width:115px;height:25px;background:#cccccc;border:1px solid #bfbfbf"></div>
<span class="t" style="top:574.24px;font:400 12.3px/17px 'Liberation Sans',sans-serif;color:#838383;left:1264.00px;transform-origin:0 0;transform:scaleX(0.9908);">Edit</span>
<div style="left:1217px;top:603px;width:115px;height:25px;background:#cccccc;border:1px solid #bfbfbf"></div>
<span class="t" style="top:608.24px;font:400 12.3px/17px 'Liberation Sans',sans-serif;color:#838383;left:1241.00px;transform-origin:0 0;transform:scaleX(1.0161);">Download...</span>
<div style="left:1217px;top:636px;width:115px;height:25px;background:#cccccc;border:1px solid #bfbfbf"></div>
<span class="t" style="top:641.24px;font:400 12.3px/17px 'Liberation Sans',sans-serif;color:#838383;left:1256.00px;transform-origin:0 0;transform:scaleX(1.0125);">Delete</span>
<div style="left:1217px;top:838px;width:113px;height:25px;background:#cccccc;border:1px solid #bfbfbf"></div>
<span class="t" style="top:843.24px;font:400 12.3px/17px 'Liberation Sans',sans-serif;color:#838383;left:1239.00px;transform-origin:0 0;transform:scaleX(0.9433);">Copy Results</span>
<div style="left:626px;top:535px;width:584px;height:328px;background:#fff;border:1px solid #828282"></div>
<div style="left:770px;top:537px;width:1px;height:23px;background:#e5e5e5;"></div>
<div style="left:977px;top:537px;width:1px;height:23px;background:#e5e5e5;"></div>
<div style="left:1069px;top:537px;width:1px;height:23px;background:#e5e5e5;"></div>
<span class="t" style="top:538.65px;font:400 14px/20px 'Liberation Sans',sans-serif;color:#111;left:634.00px;transform-origin:0 0;transform:scaleX(0.9372);">Name</span>
<span class="t" style="top:538.65px;font:400 14px/20px 'Liberation Sans',sans-serif;color:#111;left:777.00px;transform-origin:0 0;transform:scaleX(0.9998);">Directory</span>
<span class="t" style="top:538.65px;font:400 14px/20px 'Liberation Sans',sans-serif;color:#111;left:1036.26px;transform-origin:100% 0;transform:scaleX(0.9000);">Size</span>
<span class="t" style="top:538.65px;font:400 14px/20px 'Liberation Sans',sans-serif;color:#111;left:1076.00px;transform-origin:0 0;transform:scaleX(0.9678);">Changed</span>
<svg style="left:870px;top:538px" width="10" height="5" viewBox="0 0 10 5"><path d="M1,4.5 L5,0.8 L9,4.5" fill="none" stroke="#555" stroke-width="1.1"/></svg>
<div style="left:627px;top:843px;width:582px;height:19px;background:#f0f0f0;"></div>
<div style="left:647px;top:844px;width:540px;height:17px;background:#cdcdcd;"></div>
<svg style="left:632px;top:847px" width="8" height="10" viewBox="0 0 8 10"><path d="M6,1 L2,5 L6,9" fill="none" stroke="#404040" stroke-width="1.8"/></svg>
<svg style="left:1194px;top:847px" width="8" height="10" viewBox="0 0 8 10"><path d="M2,1 L6,5 L2,9" fill="none" stroke="#404040" stroke-width="1.8"/></svg>
<div style="left:618px;top:869px;width:720px;height:1px;background:#fafafa;"></div>
<span class="t" style="top:870.15px;font:400 14px/20px 'Liberation Sans',sans-serif;color:#111;left:620.00px;transform-origin:0 0;transform:scaleX(0.9235);">Done.</span>
<svg style="left:1326px;top:877px" width="12" height="12" viewBox="0 0 12 12"><rect x="8" y="0" width="2" height="2" fill="#b5b5b5"/><rect x="4" y="4" width="2" height="2" fill="#b5b5b5"/><rect x="8" y="4" width="2" height="2" fill="#b5b5b5"/><rect x="0" y="8" width="2" height="2" fill="#b5b5b5"/><rect x="4" y="8" width="2" height="2" fill="#b5b5b5"/><rect x="8" y="8" width="2" height="2" fill="#b5b5b5"/></svg>
</div></body></html>
